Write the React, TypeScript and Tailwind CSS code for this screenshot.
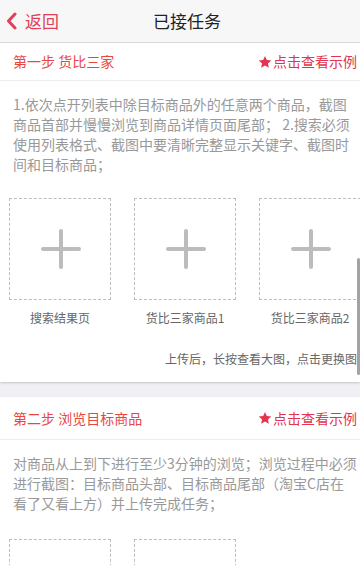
import React from "react";

const FONT = { fontFamily: '"Noto Sans CJK SC", "Noto Sans", sans-serif' };

type Step = {
  title: string;
  lines: string[];
  slots: string[];
  note?: string;
  rowHeight: string;
  slotGap: string;
};

const STEPS: Step[] = [
  {
    title: "第一步 货比三家",
    lines: [
      "1.依次点开列表中除目标商品外的任意两个商品，截图",
      "商品首部并慢慢浏览到商品详情页面尾部； 2.搜索必须",
      "使用列表格式、截图中要清晰完整显示关键字、截图时",
      "间和目标商品；",
    ],
    slots: ["搜索结果页", "货比三家商品1", "货比三家商品2"],
    note: "上传后，长按查看大图，点击更换图",
    rowHeight: "h-[38px]",
    slotGap: "mt-[24px]",
  },
  {
    title: "第二步 浏览目标商品",
    lines: [
      "对商品从上到下进行至少3分钟的浏览；浏览过程中必须",
      "进行截图：目标商品头部、目标商品尾部（淘宝C店在",
      "看了又看上方）并上传完成任务；",
    ],
    slots: ["目标商品头部", "目标商品尾部"],
    rowHeight: "h-[43px]",
    slotGap: "mt-[26px]",
  },
];

function Star() {
  return (
    <svg width="14" height="14" viewBox="0 0 24 24" className="mr-[1px]">
      <path
        d="M12 1.5l3.1 7.1 7.7.7-5.8 5.1 1.7 7.6L12 18l-6.7 4 1.7-7.6L1.2 9.3l7.7-.7z"
        fill="#e2344f"
      />
    </svg>
  );
}

function Slot({ label }: { label: string }) {
  return (
    <div className="flex w-[102px] shrink-0 flex-col items-center">
      <div className="relative h-[102px] w-[102px] border border-dashed border-[#bdbdbd]">
        <div className="absolute left-[31px] top-[48px] h-[4px] w-[40px] rounded-full bg-[#bcbcbc]" />
        <div className="absolute left-[49px] top-[30px] h-[40px] w-[4px] rounded-full bg-[#bcbcbc]" />
      </div>
      <div className="mt-[10px] whitespace-nowrap text-[12px] leading-[16px] text-[#666]">{label}</div>
    </div>
  );
}

function StepCard({ step }: { step: Step }) {
  return (
    <section className="bg-white shadow-[0_1px_2px_rgba(0,0,0,0.18)]">
      <div className={`flex items-center justify-between border-b border-[#ececec] pl-[13px] pr-[3px] ${step.rowHeight}`}>
        <span className="text-[14px] text-[#e9473f]">{step.title}</span>
        <span className="flex items-center text-[14px] text-[#e2344f]">
          <Star />
          点击查看示例
        </span>
      </div>
      <div className="pl-[13px] pt-[13px] text-[14px] leading-[20px] text-[#999]">
        {step.lines.map((l) => (
          <div key={l} className="whitespace-nowrap">
            {l}
          </div>
        ))}
      </div>
      <div className={`flex gap-[23px] overflow-hidden pl-[9px] ${step.slotGap}`}>
        {step.slots.map((s) => (
          <Slot key={s} label={s} />
        ))}
      </div>
      {step.note && (
        <div className="pb-[15px] pr-[3px] pt-[25px] text-right text-[12px] leading-[16px] text-[#666]">
          {step.note}
        </div>
      )}
    </section>
  );
}

export default function App() {
  return (
    <div className="relative h-[565px] w-[360px] overflow-hidden bg-[#f0eff4]" style={FONT}>
      <header className="flex h-[43px] items-center border-b border-[#dcdcdc] bg-[#f7f7f7]">
        <div className="flex w-[80px] items-center pl-[6px]">
          <svg width="11" height="18" viewBox="0 0 11 18">
            <path d="M9 2L2.5 9 9 16" fill="none" stroke="#e0405a" strokeWidth="3" strokeLinecap="round" strokeLinejoin="round" />
          </svg>
          <span className="ml-[8px] text-[17px] text-[#e0405a]">返回</span>
        </div>
        <h1 className="ml-[73px] text-[17px] text-[#222]">已接任务</h1>
      </header>
      <div className="flex flex-col gap-[15px]">
        {STEPS.map((s) => (
          <StepCard key={s.title} step={s} />
        ))}
      </div>
      <div className="absolute right-0 top-[258px] h-[117px] w-[3px] rounded-full bg-[#a3a3a3]" />
    </div>
  );
}
